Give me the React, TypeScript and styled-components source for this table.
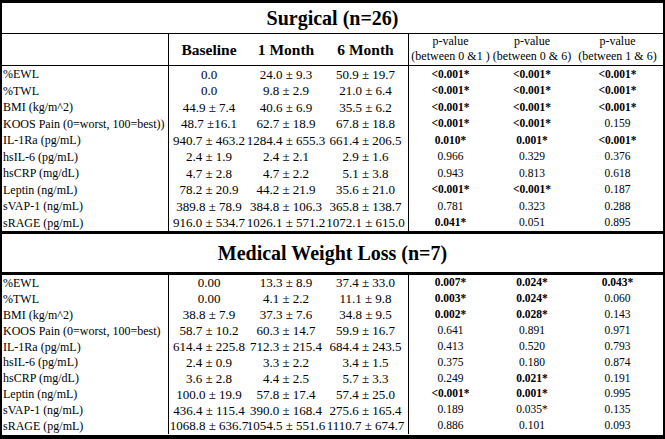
import React from "react";
import styled, { createGlobalStyle } from "styled-components";

const Global = createGlobalStyle`
  html, body { margin: 0; padding: 0; background: #fff; }
  body { font-family: "Liberation Serif", "Times New Roman", serif; color: #000; }
`;

const Frame = styled.div`
  width: 665px;
  height: 439px;
  box-sizing: border-box;
  border-left: 2px solid #000;
  border-right: 2px solid #000;
  border-top: 3px solid #000;
  border-bottom: 4px solid #000;
  overflow: hidden;
  display: flex;
  flex-direction: column;
`;

const Title = styled.div<{ $h: number; $thickTop?: boolean; $thickBottom?: boolean }>`
  height: ${(p) => p.$h}px;
  flex-shrink: 0;
  display: flex;
  align-items: center;
  justify-content: center;
  font-weight: bold;
  font-size: 20px;
  border-top: ${(p) => (p.$thickTop ? "3px" : "0")} solid #000;
  border-bottom: ${(p) => (p.$thickBottom ? "3px" : "1px")} solid #000;
  box-sizing: content-box;
`;

const Row = styled.div<{ $h: number; $line?: boolean }>`
  display: grid;
  flex-shrink: 0;
  grid-template-columns: 166px 81px 74px 85px 84px 80px 91px;
  height: ${(p) => p.$h}px;
  border-bottom: ${(p) => (p.$line ? "1px solid #000" : "none")};
  box-sizing: content-box;
`;

const Cell = styled.div<{ $divider?: boolean; $left?: boolean; $bold?: boolean; $size?: number }>`
  display: flex;
  align-items: center;
  justify-content: ${(p) => (p.$left ? "flex-start" : "center")};
  padding-left: ${(p) => (p.$left ? "1px" : "0")};
  box-sizing: border-box;
  border-left: ${(p) => (p.$divider ? "1px solid #000" : "none")};
  font-size: ${(p) => p.$size ?? 13}px;
  font-weight: ${(p) => (p.$bold ? "bold" : "normal")};
  white-space: nowrap;
  line-height: 1;
`;

const HeadCell = styled(Cell)`
  font-size: 15.5px;
  font-weight: bold;
`;

const PHead = styled(Cell)`
  flex-direction: column;
  font-size: 12px;
  line-height: 15px;
  padding-bottom: 1px;
`;

type P = [string, boolean?];
type DataRow = { label: string; vals: [string, string, string]; p: [P, P, P] };

const surgical: DataRow[] = [
  { label: "%EWL", vals: ["0.0", "24.0 ± 9.3", "50.9 ± 19.7"], p: [["<0.001*", true], ["<0.001*", true], ["<0.001*", true]] },
  { label: "%TWL", vals: ["0.0", "9.8 ± 2.9", "21.0 ± 6.4"], p: [["<0.001*", true], ["<0.001*", true], ["<0.001*", true]] },
  { label: "BMI (kg/m^2)", vals: ["44.9 ± 7.4", "40.6 ± 6.9", "35.5 ± 6.2"], p: [["<0.001*", true], ["<0.001*", true], ["<0.001*", true]] },
  { label: "KOOS Pain (0=worst, 100=best))", vals: ["48.7 ±16.1", "62.7 ± 18.9", "67.8 ± 18.8"], p: [["<0.001*", true], ["<0.001*", true], ["0.159"]] },
  { label: "IL-1Ra (pg/mL)", vals: ["940.7 ± 463.2", "1284.4 ± 655.3", "661.4 ± 206.5"], p: [["0.010*", true], ["0.001*", true], ["<0.001*", true]] },
  { label: "hsIL-6 (pg/mL)", vals: ["2.4 ± 1.9", "2.4 ± 2.1", "2.9 ± 1.6"], p: [["0.966"], ["0.329"], ["0.376"]] },
  { label: "hsCRP (mg/dL)", vals: ["4.7 ± 2.8", "4.7 ± 2.2", "5.1 ± 3.8"], p: [["0.943"], ["0.813"], ["0.618"]] },
  { label: "Leptin (ng/mL)", vals: ["78.2 ± 20.9", "44.2 ± 21.9", "35.6 ± 21.0"], p: [["<0.001*", true], ["<0.001*", true], ["0.187"]] },
  { label: "sVAP-1 (ng/mL)", vals: ["389.8 ± 78.9", "384.8 ± 106.3", "365.8 ± 138.7"], p: [["0.781"], ["0.323"], ["0.288"]] },
  { label: "sRAGE (pg/mL)", vals: ["916.0 ± 534.7", "1026.1 ± 571.2", "1072.1 ± 615.0"], p: [["0.041*", true], ["0.051"], ["0.895"]] },
];

const medical: DataRow[] = [
  { label: "%EWL", vals: ["0.00", "13.3 ± 8.9", "37.4 ± 33.0"], p: [["0.007*", true], ["0.024*", true], ["0.043*", true]] },
  { label: "%TWL", vals: ["0.00", "4.1 ± 2.2", "11.1 ± 9.8"], p: [["0.003*", true], ["0.024*", true], ["0.060"]] },
  { label: "BMI (kg/m^2)", vals: ["38.8 ± 7.9", "37.3 ± 7.6", "34.8 ± 9.5"], p: [["0.002*", true], ["0.028*", true], ["0.143"]] },
  { label: "KOOS Pain (0=worst, 100=best)", vals: ["58.7 ± 10.2", "60.3 ± 14.7", "59.9 ± 16.7"], p: [["0.641"], ["0.891"], ["0.971"]] },
  { label: "IL-1Ra (pg/mL)", vals: ["614.4 ± 225.8", "712.3 ± 215.4", "684.4 ± 243.5"], p: [["0.413"], ["0.520"], ["0.793"]] },
  { label: "hsIL-6 (pg/mL)", vals: ["2.4 ± 0.9", "3.3 ± 2.2", "3.4 ± 1.5"], p: [["0.375"], ["0.180"], ["0.874"]] },
  { label: "hsCRP (mg/dL)", vals: ["3.6 ± 2.8", "4.4 ± 2.5", "5.7 ± 3.3"], p: [["0.249"], ["0.021*", true], ["0.191"]] },
  { label: "Leptin (ng/mL)", vals: ["100.0 ± 19.9", "57.8 ± 17.4", "57.4 ± 25.0"], p: [["<0.001*", true], ["0.001*", true], ["0.995"]] },
  { label: "sVAP-1 (ng/mL)", vals: ["436.4 ± 115.4", "390.0 ± 168.4", "275.6 ± 165.4"], p: [["0.189"], ["0.035*"], ["0.135"]] },
  { label: "sRAGE (pg/mL)", vals: ["1068.8 ± 636.7", "1054.5 ± 551.6", "1110.7 ± 674.7"], p: [["0.886"], ["0.101"], ["0.093"]] },
];

const Body: React.FC<{ rows: DataRow[]; h: number }> = ({ rows, h }) => (
  <>
    {rows.map((r) => (
      <Row key={r.label} $h={h}>
        <Cell $left $size={12}>{r.label}</Cell>
        <Cell $divider>{r.vals[0]}</Cell>
        <Cell>{r.vals[1]}</Cell>
        <Cell>{r.vals[2]}</Cell>
        {r.p.map(([v, b], i) => (
          <Cell key={i} $divider={i === 0} $bold={b} $size={11.5}>
            {v}
          </Cell>
        ))}
      </Row>
    ))}
  </>
);

export default function App() {
  return (
    <>
      <Global />
      <Frame>
        <Title $h={30}>Surgical (n=26)</Title>
        <Row $h={31} $line>
          <Cell $left />
          <HeadCell $divider>Baseline</HeadCell>
          <HeadCell>1 Month</HeadCell>
          <HeadCell>6 Month</HeadCell>
          <PHead $divider>
            <span>p-value</span>
            <span>(between 0 &amp;1 )</span>
          </PHead>
          <PHead>
            <span>p-value</span>
            <span>(between 0 &amp; 6)</span>
          </PHead>
          <PHead>
            <span>p-value</span>
            <span>(between 1 &amp; 6)</span>
          </PHead>
        </Row>
        <Body rows={surgical} h={16.5} />
        <Title $h={38} $thickTop $thickBottom>
          Medical Weight Loss (n=7)
        </Title>
        <Body rows={medical} h={15.9} />
      </Frame>
    </>
  );
}
